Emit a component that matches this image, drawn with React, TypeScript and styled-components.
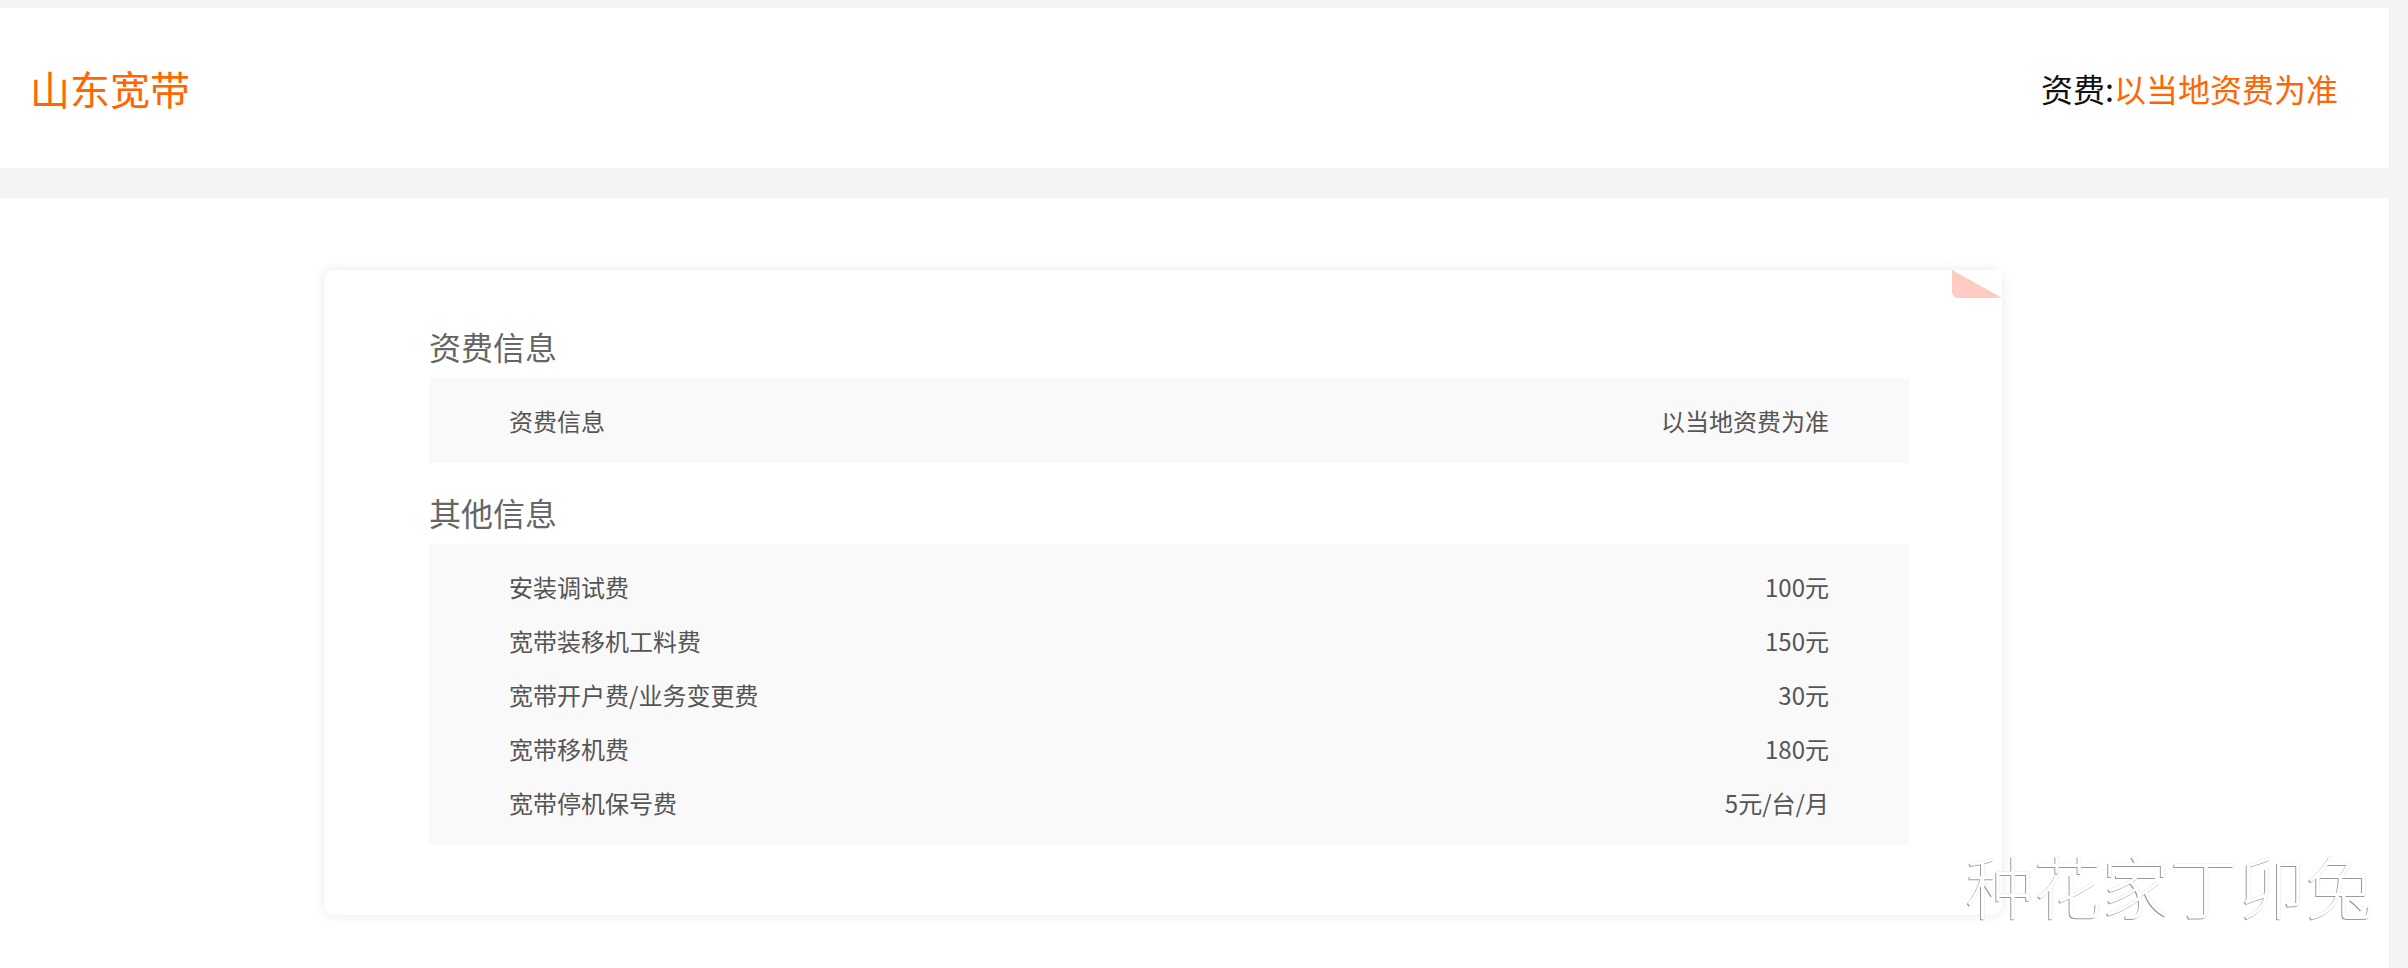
import React from "react";
import styled, { createGlobalStyle } from "styled-components";

const GlobalStyle = createGlobalStyle`
  html, body {
    margin: 0;
    padding: 0;
    background: #f4f4f4;
    font-family: "Noto Sans CJK SC", "Microsoft YaHei", "Noto Sans", sans-serif;
  }
  * { box-sizing: border-box; }
`;

const Page = styled.div`
  position: relative;
  width: 2408px;
  min-height: 968px;
  padding: 8px 19px 0 0;
  overflow: hidden;
`;

const Header = styled.header`
  height: 160px;
  background: #fff;
  display: flex;
  align-items: center;
  justify-content: space-between;
  padding: 0 51px 0 30px;
`;

const Title = styled.h1`
  margin: 0;
  font-size: 40px;
  font-weight: 400;
  color: #ff6600;
  line-height: 1;
`;

const Tariff = styled.div`
  font-size: 32px;
  color: #111;
  line-height: 1;
`;

const Accent = styled.span`
  color: #ff6600;
`;

const Main = styled.main`
  margin-top: 30px;
  background: #fff;
  min-height: 770px;
  padding: 72px 0 40px 324px;
`;

const Card = styled.section`
  position: relative;
  width: 1678px;
  background: #fff;
  border-radius: 10px;
  box-shadow: 0 0 12px rgba(0, 0, 0, 0.09);
  padding: 60px 93px 70px 105px;
`;

const Fold = styled.div`
  position: absolute;
  top: 0;
  right: 0;
  width: 50px;
  height: 28px;
  border-bottom-left-radius: 6px;
  background: linear-gradient(to bottom left, #fff 50%, #ffcbc3 50%);
`;

const SectionTitle = styled.h2<{ $first?: boolean }>`
  margin: ${(p) => (p.$first ? "0" : "33px")} 0 16px;
  font-size: 32px;
  line-height: 32px;
  font-weight: 400;
  color: #666;
`;

const Table = styled.div`
  background: #f9f9f9;
  padding: 15px 80px 16px 80px;
`;

const Row = styled.div`
  height: 54px;
  display: flex;
  align-items: center;
  justify-content: space-between;
  font-size: 24px;
  color: #555;
`;

const Watermark = styled.div`
  position: absolute;
  right: 34px;
  top: 851px;
  font-size: 68px;
  line-height: 1;
  font-weight: 300;
  color: #fff;
  text-shadow: -1px 1px 0 #9a9a9a, 0 0 1px #c8c8c8;
  pointer-events: none;
`;

const feeRows = [{ label: "资费信息", value: "以当地资费为准" }];

const otherRows = [
  { label: "安装调试费", value: "100元" },
  { label: "宽带装移机工料费", value: "150元" },
  { label: "宽带开户费/业务变更费", value: "30元" },
  { label: "宽带移机费", value: "180元" },
  { label: "宽带停机保号费", value: "5元/台/月" },
];

export default function App() {
  return (
    <>
      <GlobalStyle />
      <Page>
        <Header>
          <Title>山东宽带</Title>
          <Tariff>
            资费:<Accent>以当地资费为准</Accent>
          </Tariff>
        </Header>
        <Main>
          <Card>
            <Fold />
            <SectionTitle $first>资费信息</SectionTitle>
            <Table>
              {feeRows.map((r) => (
                <Row key={r.label}>
                  <span>{r.label}</span>
                  <span>{r.value}</span>
                </Row>
              ))}
            </Table>
            <SectionTitle>其他信息</SectionTitle>
            <Table>
              {otherRows.map((r) => (
                <Row key={r.label}>
                  <span>{r.label}</span>
                  <span>{r.value}</span>
                </Row>
              ))}
            </Table>
          </Card>
        </Main>
        <Watermark>种花家丁卯兔</Watermark>
      </Page>
    </>
  );
}
